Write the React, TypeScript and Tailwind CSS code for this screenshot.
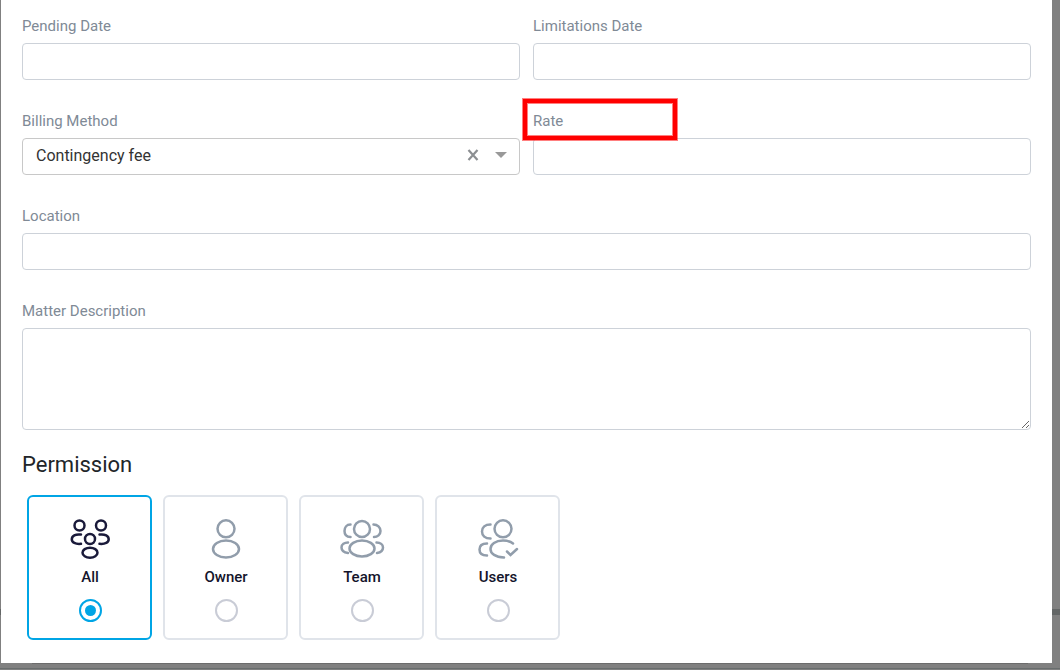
import { useState } from 'react';
import type { ReactNode } from 'react';
import clsx from 'clsx';

const labelClass = 'block text-[15px] leading-5 text-[#808a96]';
const inputClass =
  'block w-full rounded border border-[#cdd2d9] bg-white px-3 text-base text-[#333] outline-none focus:border-[#00a5e5]';

const billingMethods = ['Contingency fee', 'Flat fee', 'Hourly'];

interface FieldProps {
  id: string;
  label: string;
  children: ReactNode;
}

function Field({ id, label, children }: FieldProps) {
  return (
    <div className="relative flex flex-col gap-[7px]">
      <label htmlFor={id} className={labelClass}>
        {label}
      </label>
      {children}
    </div>
  );
}

function TextField({ id, label }: { id: string; label: string }) {
  return (
    <Field id={id} label={label}>
      <input id={id} type="text" className={clsx(inputClass, 'h-[37px]')} />
    </Field>
  );
}

function BillingMethodField() {
  const [method, setMethod] = useState('Contingency fee');

  return (
    <Field id="billing-method" label="Billing Method">
      <div className="relative">
        <select
          id="billing-method"
          value={method}
          onChange={(e) => setMethod(e.target.value)}
          className="block h-[37px] w-full appearance-none rounded border border-[#c8c8c8] bg-white pr-16 pb-0.5 pl-[13px] text-base text-[#333] outline-none"
        >
          <option value=""></option>
          {billingMethods.map((name) => (
            <option key={name}>{name}</option>
          ))}
        </select>
        <div className="pointer-events-none absolute inset-y-0 right-[13px] flex items-center gap-4 pb-1">
          <button
            type="button"
            aria-label="Clear"
            className="pointer-events-auto"
            onClick={() => setMethod('')}
          >
            <svg width="12" height="12" viewBox="0 0 12 12" fill="none" stroke="#8c8f92" strokeWidth="2.2">
              <path d="M1.5 1l9 10M10.5 1l-9 10" />
            </svg>
          </button>
          <svg width="12" height="6" viewBox="0 0 12 6" fill="#999">
            <path d="M0 0h12L6 6z" />
          </svg>
        </div>
      </div>
    </Field>
  );
}

// All icons share a 46x42 canvas
function AllIcon() {
  return (
    <>
      <circle cx="12.5" cy="7.5" r="5" />
      <circle cx="34" cy="7.5" r="5" />
      <circle cx="23" cy="21" r="5" />
      <ellipse cx="23" cy="34.7" rx="7.5" ry="5" />
      <path d="M14 16.6c-5.6-.8-9.2 1.4-9.2 4.600s3.600 5.200 9.200 4.600M32.500 16.600c5.600-.8 9.200 1.400 9.200 4.600s-3.600 5.200-9.200 4.600" />
    </>
  );
}

function OwnerIcon() {
  return (
    <>
      <circle cx="23" cy="10.8" r="8.5" />
      <ellipse cx="23" cy="31" rx="13" ry="8.5" />
    </>
  );
}

function TeamIcon() {
  return (
    <>
      <circle cx="23" cy="11" r="8" />
      <ellipse cx="23" cy="30.5" rx="12.5" ry="8" />
      <path d="M11.5 6.5C7.500 6.500 5.500 9.500 5.500 13s2 6 6 6M34.500 6.500c4 0 7 3 7 6.500s-3 6-6.500 6" />
      <path d="M9 24.5c-3.500 0-6.500 2-6.500 5s2.500 5 6.500 5.500M37.500 24.500c4 0 6.500 2 6.500 5s-2.500 5-6 5.500" />
    </>
  );
}

function UsersIcon() {
  return (
    <>
      <circle cx="28" cy="10.8" r="8.5" />
      <path d="M38 25.5c-2.500-2-6-2.900-10-2.900-7.500 0-12.500 3.600-12.500 8.400s5 8.200 13.500 8.400" />
      <path d="M15.5 6.500C10 6.500 7 9.500 7 13.500s3 7 8.500 7M12 25.500c-5 0-7.500 2.500-7.500 6s2.500 6 7.500 6" />
      <path d="M32 33.500l3.500 3.500 6.500-6" />
    </>
  );
}

const permissions = [
  { value: 'all', label: 'All', Icon: AllIcon },
  { value: 'owner', label: 'Owner', Icon: OwnerIcon },
  { value: 'team', label: 'Team', Icon: TeamIcon },
  { value: 'users', label: 'Users', Icon: UsersIcon },
];

function PermissionPicker() {
  const [selected, setSelected] = useState('all');

  return (
    <div role="radiogroup" aria-labelledby="permission-title" className="flex flex-wrap gap-[11px] px-[5px]">
      {permissions.map(({ value, label, Icon }) => (
        <label
          key={value}
          className={clsx(
            'flex w-[125px] cursor-pointer flex-col items-center rounded-md border-2 pt-[21px] pb-4 pl-px',
            selected === value ? 'border-[#00a5e5] text-[#1a1a3a]' : 'border-[#e0e4ea] text-[#919dab]'
          )}
        >
          <svg
            width="46"
            height="42"
            viewBox="0 0 46 42"
            fill="none"
            stroke="currentColor"
            strokeWidth="2.5"
            strokeLinecap="round"
          >
            <Icon />
          </svg>
          <span className="mt-[7px] text-[15px] leading-5 font-medium text-[#14142b]">{label}</span>
          <input
            type="radio"
            name="permission"
            value={value}
            checked={selected === value}
            onChange={() => setSelected(value)}
            className="mt-3 grid size-[23px] appearance-none place-items-center rounded-full border-2 border-[#c9ccd6] before:size-[11px] before:rounded-full checked:border-[#00a5e5] checked:before:bg-[#00a5e5]"
          />
        </label>
      ))}
    </div>
  );
}

export default function App() {
  return (
    <div className="relative min-h-screen bg-[#808080] pr-2 pb-[7px] pl-px font-[Roboto,sans-serif]">
      {/* dimmed page edges behind the dialog */}
      <div className="absolute inset-x-0 bottom-[55px] h-1.5 bg-[#636666]" />
      <div className="absolute inset-x-0 bottom-px h-px bg-[#686d6d]" />
      <div className="absolute inset-x-8 bottom-1.5 h-px bg-[#6c6c6c]" />

      <form className="relative bg-white px-[21px] pt-4 pb-[23px]">
        <div className="grid grid-cols-2 gap-x-[13px] gap-y-[31px]">
          <TextField id="pending-date" label="Pending Date" />
          <TextField id="limitations-date" label="Limitations Date" />
          <BillingMethodField />
          <div className="relative">
            <TextField id="rate" label="Rate" />
            <div className="pointer-events-none absolute -top-3 -left-2.5 h-[41px] w-[154px] border-4 border-[#ff0000] ring-1 inset-ring-1 ring-[#ff0000]/50 inset-ring-[#ff0000]/50" />
          </div>
          <div className="col-span-2">
            <TextField id="location" label="Location" />
          </div>
          <div className="col-span-2">
            <Field id="description" label="Matter Description">
              <textarea id="description" className={clsx(inputClass, 'h-[102px] resize py-2')} />
            </Field>
          </div>
        </div>

        <h2 id="permission-title" className="mt-[21px] mb-4 text-[22px] leading-7 text-[#212529]">
          Permission
        </h2>
        <PermissionPicker />
      </form>
    </div>
  );
}
